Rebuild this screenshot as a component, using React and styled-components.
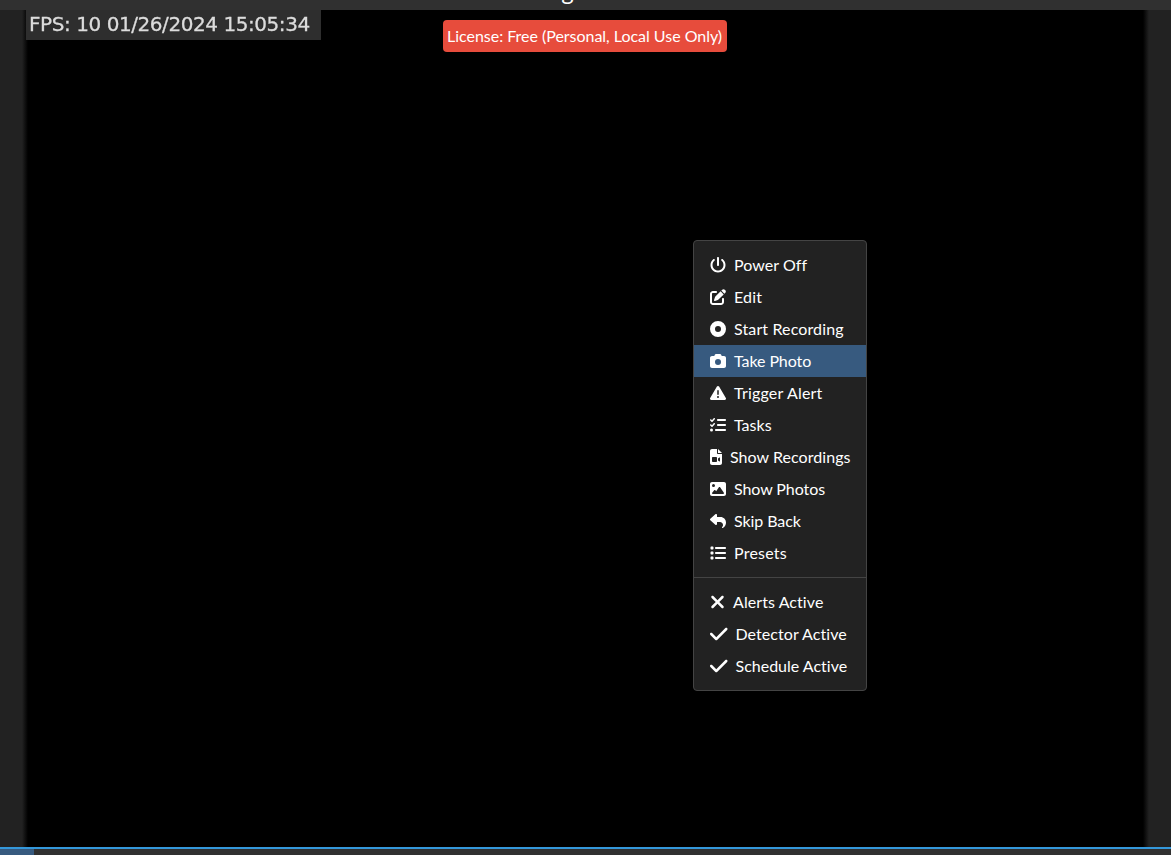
import styled, { createGlobalStyle } from 'styled-components'
import {
    FaPowerOff, FaPenToSquare, FaCircleDot, FaCamera, FaTriangleExclamation, FaListCheck,
    FaFileVideo, FaImage, FaReply, FaList, FaXmark, FaCheck
} from 'react-icons/fa6'

const GlobalStyle = createGlobalStyle`
  * {
    box-sizing: border-box;
  }

  body {
    margin: 0;
    background: #222;
    color: #fff;
    font: 400 16px/24px Lato, sans-serif;
    font-variant-ligatures: none;
    overflow: hidden;
  }
`

const Page = styled.div`
  height: 100vh;
  display: flex;
  flex-direction: column;
`

const Header = styled.div`
  height: 10px;
  flex: none;
  display: flex;
  justify-content: center;
  align-items: flex-end;
  overflow: hidden;
  background: #303030;
  padding: 0 36px 7px 0;
  font-size: 24px;
`

const Stage = styled.div`
  flex: 1;
  display: flex;
  justify-content: center;
  position: relative;
`

const Video = styled.div`
  width: 1127px;
  display: flex;
  align-items: flex-start;
  background: linear-gradient(90deg, #222, #000 6px, #000 calc(100% - 6px), #222);
`

const Stamp = styled.div`
  width: 295px;
  height: 30px;
  margin-left: 4px;
  padding-left: 3px;
  background: #2e2e2e;
  color: #dcdcdc;
  font: 20px/29px 'DejaVu Sans', sans-serif;
  letter-spacing: -0.44px;
  white-space: nowrap;
  -webkit-text-stroke: 0.3px #dcdcdc;
  filter: blur(0.5px);
`

const License = styled.div`
  position: absolute;
  top: 10px;
  left: 443px;
  width: 284px;
  padding: 4px;
  border-radius: 4px;
  background: #e74c3c;
  letter-spacing: -0.02px;
  white-space: nowrap;
`

const Menu = styled.div`
  position: absolute;
  top: 230px;
  left: 693px;
  width: 174px;
  padding: 8px 0;
  border: 1px solid #444;
  border-radius: 4px;
  background: #222;
`

const MenuItem = styled.div`
  height: 32px;
  padding: 0 16px;
  display: flex;
  align-items: center;
  gap: 8px;
  white-space: nowrap;
  letter-spacing: ${({ $tracking }) => $tracking || 0}px;
  background: ${({ $active }) => $active ? '#375a7f' : 'transparent'};

  & svg {
    flex: none;
    width: ${({ $iconWidth }) => $iconWidth || 16}px;
    height: ${({ $large }) => $large ? 20 : 16}px;
  }
`

const Divider = styled.div`
  height: 1px;
  margin: 8px 0;
  background: #444;
`

const Timeline = styled.div`
  height: 8px;
  flex: none;
  border-top: 2px solid #3498db;
  background: #303030;
`

const TimelineButton = styled.div`
  width: 34px;
  height: 6px;
  background: #375a7f;
`

const actions = [
    { label: 'Power Off', icon: FaPowerOff, tracking: 0.05 },
    { label: 'Edit', icon: FaPenToSquare, tracking: 0.15 },
    { label: 'Start Recording', icon: FaCircleDot, tracking: 0.13 },
    { label: 'Take Photo', icon: FaCamera, tracking: -0.08, active: true },
    { label: 'Trigger Alert', icon: FaTriangleExclamation, tracking: 0.2 },
    { label: 'Tasks', icon: FaListCheck },
    { label: 'Show Recordings', icon: FaFileVideo, width: 12, tracking: 0.05 },
    { label: 'Show Photos', icon: FaImage, tracking: -0.08 },
    { label: 'Skip Back', icon: FaReply, tracking: -0.08 },
    { label: 'Presets', icon: FaList, tracking: 0.22 },
]

const toggles = [
    { label: 'Alerts Active', icon: FaXmark, width: 15, tracking: 0.08 },
    { label: 'Detector Active', icon: FaCheck, width: 17.5, tracking: 0.06 },
    { label: 'Schedule Active', icon: FaCheck, width: 17.5 },
]

const App = () => {
    return (
        <Page>
            <GlobalStyle/>
            <Header>g</Header>
            <Stage>
                <Video>
                    <Stamp>FPS: 10 01/26/2024 15:05:34</Stamp>
                </Video>
                <License>License: Free (Personal, Local Use Only)</License>
                <Menu>
                    {actions.map(({ label, icon: Icon, width, tracking, active }) => (
                        <MenuItem key={label} $iconWidth={width} $tracking={tracking} $active={active}>
                            <Icon/>{label}
                        </MenuItem>
                    ))}
                    <Divider/>
                    {toggles.map(({ label, icon: Icon, width, tracking }) => (
                        <MenuItem key={label} $iconWidth={width} $tracking={tracking} $large>
                            <Icon/>{label}
                        </MenuItem>
                    ))}
                </Menu>
            </Stage>
            <Timeline>
                <TimelineButton/>
            </Timeline>
        </Page>
    )
}

export default App
